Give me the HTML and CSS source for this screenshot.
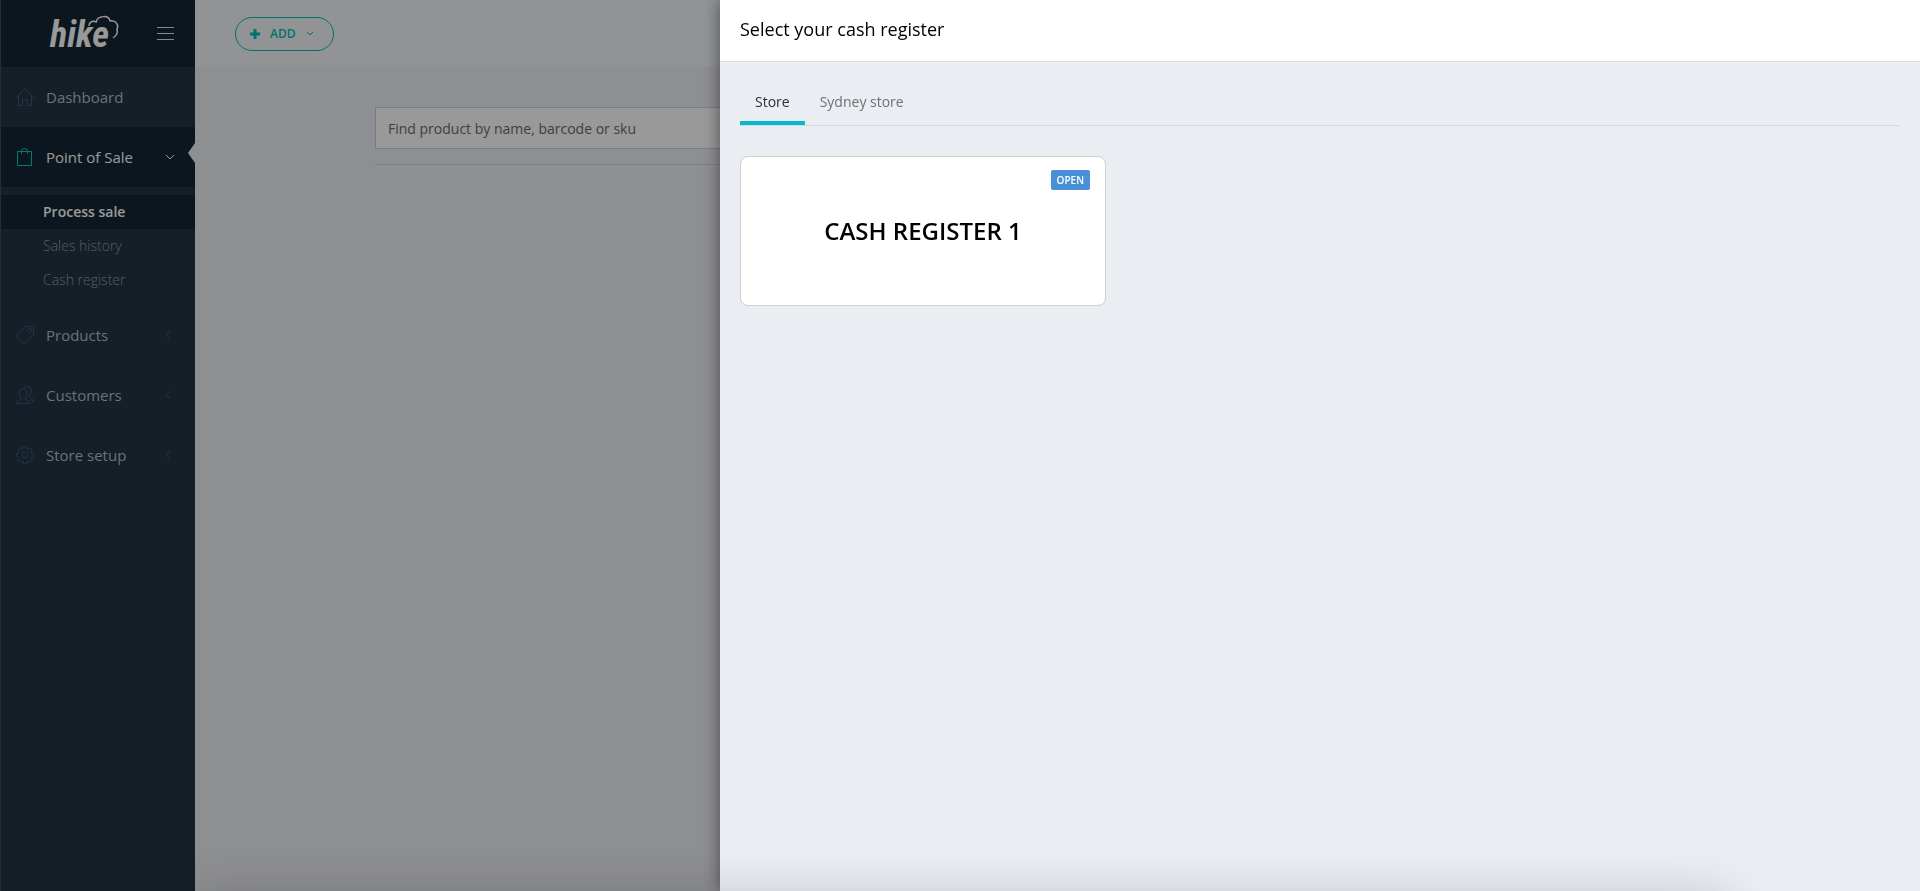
FILE: index.html
```html
<!DOCTYPE html>
<html lang="en">
<head>
    <meta charset="UTF-8">
    <meta name="viewport" content="width=device-width, initial-scale=1.0">
    <title>Hike - Process sale</title>
    <link rel="stylesheet" href="styles.css">
</head>
<body>
    <div class="app">
        <aside class="sidebar">
            <div class="brand">
                <a href="#" class="logo" aria-label="hike">
                    <svg width="72" height="42" viewBox="0 0 72 42">
                        <text class="logo-text" x="2" y="34">hike</text>
                        <path class="logo-cloud" d="M41 13c0-4 4-6 7-4 2-7 13-7 14-1 6-1 9 4 7 8 1 4-1 7-4 9"/>
                    </svg>
                </a>
                <button type="button" class="menu-toggle" aria-label="Toggle menu">
                    <span></span><span></span><span></span>
                </button>
            </div>
            <nav class="nav">
                <a href="#" class="nav-item">
                    <svg class="icon" viewBox="0 0 18 18"><path d="M.5 9.500 9 .8l8.500 8.700M2.500 8v9.500h4v-6h5v6h4V8"/></svg>
                    <span>Dashboard</span>
                </a>
                <a href="#" class="nav-item active">
                    <svg class="icon" viewBox="0 0 18 18"><path d="M1.500 3.500h14v14h-14zM5.500 6V3.500a3 3 0 0 1 6 0V6"/></svg>
                    <span>Point of Sale</span>
                    <svg class="arrow" viewBox="0 0 10 10"><path d="m1 3 4 4 4-4"/></svg>
                </a>
                <div class="subnav">
                    <a href="#" class="current">Process sale</a>
                    <a href="#">Sales history</a>
                    <a href="#">Cash register</a>
                </div>
                <a href="#" class="nav-item">
                    <svg class="icon" viewBox="0 0 18 18"><path d="M10 .5h6.500l1 1V8L8 17.500.5 10z"/><circle cx="13.500" cy="4.500" r="1.800"/></svg>
                    <span>Products</span>
                    <svg class="arrow" viewBox="0 0 10 10"><path d="M7 1 3 5l4 4"/></svg>
                </a>
                <a href="#" class="nav-item">
                    <svg class="icon" viewBox="0 0 18 18"><path d="M.5 17.500h13c0-2-.5-2.500-2-3l-2-.8v-2c1.500-1.500 1.500-3 1.500-5 0-5-8-5-8 0 0 2 0 3.500 1.500 5v2l-2 .8c-1.500.5-2 1-2 3zM8 1.500c3-2 7-1 7 3 0 2 0 3.500-1.500 5v2l2 .8c1.500.5 2 1 2 2.200H15"/></svg>
                    <span>Customers</span>
                    <svg class="arrow" viewBox="0 0 10 10"><path d="M7 1 3 5l4 4"/></svg>
                </a>
                <a href="#" class="nav-item">
                    <svg class="icon" viewBox="0 0 18 18"><path d="M7.500.5h3l.4 2.400 1.500.6 2-1.300 1.800 1.800-1.300 2 .6 1.500 2 .5v2.500l-2 .5-.6 1.500 1.300 2-1.800 1.800-2-1.300-1.500.6-.4 2.400h-3l-.4-2.400-1.500-.6-2 1.300-1.800-1.800 1.300-2-.6-1.500-2-.5V7.500l2-.5.6-1.500-1.300-2 1.800-1.800 2 1.300 1.500-.6z"/><circle cx="9" cy="9" r="3"/></svg>
                    <span>Store setup</span>
                    <svg class="arrow" viewBox="0 0 10 10"><path d="M7 1 3 5l4 4"/></svg>
                </a>
            </nav>
        </aside>

        <main class="main">
            <header class="topbar">
                <button type="button" class="add-btn">
                    <svg width="10" height="10" viewBox="0 0 10 10"><path d="M5 0v10M0 5h10" stroke-width="3"/></svg>
                    <span>ADD</span>
                    <svg width="8" height="8" viewBox="0 0 8 8"><path d="m1 2 3 3 3-3"/></svg>
                </button>
            </header>
            <div class="sale">
                <input type="text" class="search" placeholder="Find product by name, barcode or sku" aria-label="Find product">
                <hr>
            </div>
        </main>
    </div>

    <div class="overlay"></div>

    <section class="panel" role="dialog" aria-labelledby="panel-title">
        <header class="panel-header">
            <h1 id="panel-title">Select your cash register</h1>
        </header>
        <div class="panel-body">
            <div class="tabs" role="tablist">
                <button type="button" class="tab selected" role="tab" aria-selected="true">Store</button>
                <button type="button" class="tab" role="tab" aria-selected="false">Sydney store</button>
            </div>
            <div class="registers">
                <button type="button" class="register">
                    <span class="badge">OPEN</span>
                    <span class="register-name">CASH REGISTER 1</span>
                </button>
            </div>
        </div>
    </section>

    <div class="bottom-shadow"></div>
</body>
</html>
```

FILE: styles.css
```css
* {
    box-sizing: border-box;
}
body {
    margin: 0;
    font-family: "Open Sans", sans-serif;
    font-size: 14px;
    line-height: 20px;
    overflow: hidden;
}
button {
    font-family: inherit;
    cursor: pointer;
}
a {
    text-decoration: none;
}
svg {
    fill: none;
    stroke: currentColor;
}
.app {
    display: flex;
    min-height: 100vh;
    background: #edeef5;
}

/* Sidebar */
.sidebar {
    width: 195px;
    flex-shrink: 0;
    background: #233441;
    border-left: 1px solid #3c4a58;
}
.brand {
    display: flex;
    align-items: center;
    justify-content: space-between;
    height: 67px;
    padding: 0 21px 0 47px;
    background: #142632;
}
.logo {
    display: flex;
    color: #fff;
}
.logo-text {
    font-family: "Liberation Sans Narrow", "Roboto Condensed", "Open Sans", sans-serif;
    font-size: 36px;
    line-height: 40px;
    font-weight: 700;
    font-style: italic;
    fill: currentColor;
    stroke: none;
}
.logo-cloud {
    stroke-width: 1.5;
}
.menu-toggle {
    display: flex;
    flex-direction: column;
    gap: 5px;
    width: 17px;
    padding: 0;
    border: none;
    background: none;
}
.menu-toggle span {
    height: 1px;
    background: #dde3e8;
}
.nav-item {
    display: flex;
    align-items: center;
    gap: 12px;
    height: 60px;
    padding: 0 20px 0 15px;
    font-size: 15px;
    color: #b2bec8;
}
.nav-item .icon {
    width: 18px;
    height: 18px;
    color: #3f5878;
}
.nav-item .arrow {
    width: 10px;
    height: 10px;
    margin-left: auto;
    margin-right: 2px;
    color: #375681;
}
.nav-item.active {
    position: relative;
    background: #142632;
    color: #fff;
}
.nav-item.active .icon {
    color: #00cfc0;
}
.nav-item.active .arrow {
    margin-right: 0;
    color: #fff;
}
.nav-item.active::after {
    content: "";
    position: absolute;
    top: 16px;
    right: 0;
    border: 10px solid transparent;
    border-left: none;
    border-right: 7px solid #edeef5;
}
.subnav {
    padding: 8px 0;
}
.subnav a {
    display: block;
    padding: 7px 0 7px 42px;
    color: #8f9caa;
    font-weight: 300;
}
.subnav .current {
    background: #142632;
    color: #fff;
    font-weight: 600;
}

/* Sale screen */
.main {
    flex: 1;
}
.topbar {
    display: flex;
    align-items: center;
    height: 67px;
    padding: 0 40px;
    background: #f3f6f9;
}
.add-btn {
    display: flex;
    align-items: center;
    gap: 10px;
    height: 34px;
    padding: 0 19px 0 14px;
    border: 1px solid #00bfb2;
    border-radius: 17px;
    background: transparent;
    color: #00bfb2;
    font-size: 12px;
    font-weight: 600;
}
.sale {
    padding: 40px 180px;
}
.search {
    display: block;
    width: 100%;
    height: 42px;
    padding: 0 12px;
    border: 1px solid #c3d6d9;
    background: #fff;
    font-family: inherit;
    font-size: 14px;
}
.search::placeholder {
    color: #6a6a6a;
    opacity: 1;
}
.sale hr {
    margin: 15px 0 0;
    border: none;
    border-top: 1px solid #d3d6db;
}
.overlay {
    position: fixed;
    inset: 0;
    background: rgba(0, 0, 0, 0.4);
}

/* Slide-in panel */
.panel {
    position: fixed;
    top: 0;
    right: 0;
    bottom: 0;
    width: 62.5%;
    background: #eaedf2;
    box-shadow: 0 0 16px rgba(0, 0, 0, 0.5);
}
.panel-header {
    height: 62px;
    padding: 17px 20px;
    background: #fff;
    border-bottom: 1px solid #dadde0;
}
.panel-header h1 {
    margin: 0;
    font-size: 18px;
    line-height: 24px;
    font-weight: 400;
    color: #000;
}
.panel-body {
    padding: 20px;
}
.tabs {
    display: flex;
    border-bottom: 1px solid #d5d9df;
}
.tab {
    height: 43px;
    padding: 0 15px;
    border: none;
    border-bottom: 4px solid transparent;
    background: none;
    font-size: 14px;
    color: #6f7174;
}
.tab.selected {
    border-bottom-color: #00bccd;
    color: #2b2f33;
}
.registers {
    display: grid;
    grid-template-columns: repeat(3, 1fr);
    gap: 31px;
    padding-top: 30px;
}
.register {
    position: relative;
    height: 150px;
    border: 1px solid #cfcfcf;
    border-radius: 8px;
    background: #fff;
    color: #000;
}
.register-name {
    font-size: 24px;
    line-height: 32px;
    font-weight: 600;
}
.badge {
    position: absolute;
    top: 13px;
    right: 15px;
    padding: 0 6px;
    border-radius: 2px;
    background: #4a90d9;
    color: #fff;
    font-size: 10px;
    line-height: 20px;
    font-weight: 600;
}
.bottom-shadow {
    position: fixed;
    left: 190px;
    right: 190px;
    bottom: -40px;
    height: 30px;
    border-radius: 20px;
    box-shadow: 0 0 50px rgba(0, 0, 0, 0.25);
    pointer-events: none;
}
```
